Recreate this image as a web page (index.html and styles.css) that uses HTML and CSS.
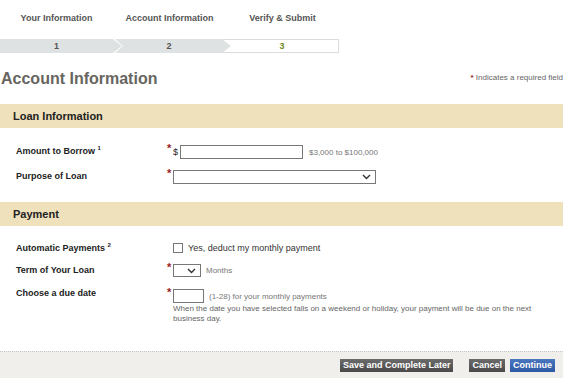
FILE: index.html
```html
<!DOCTYPE html>
<html lang="en">
<head>
    <meta charset="UTF-8">
    <meta name="viewport" content="width=device-width, initial-scale=1.0">
    <title>Account Information</title>
    <link rel="stylesheet" href="styles.css">
</head>
<body>
    <div class="page">
        <div class="step-labels">
            <span>Your Information</span>
            <span>Account Information</span>
            <span>Verify &amp; Submit</span>
        </div>
        <div class="step-bar">
            <div class="step step-1">1</div>
            <div class="step step-2">2</div>
            <div class="step step-3">3</div>
        </div>

        <div class="title-row">
            <h1>Account Information</h1>
            <span class="req-note"><span class="star">*</span> Indicates a required field</span>
        </div>

        <div class="section-head">Loan Information</div>
        <div class="form-rows loan">
            <div class="row">
                <label class="field-label" for="amount">Amount to Borrow <sup>1</sup></label>
                <div class="field">
                    <span class="req">*</span>
                    <span class="dollar">$</span>
                    <input type="text" id="amount" class="input-amount">
                    <span class="hint">$3,000 to $100,000</span>
                </div>
            </div>
            <div class="row">
                <label class="field-label" for="purpose">Purpose of Loan</label>
                <div class="field">
                    <span class="req">*</span>
                    <select id="purpose" class="select-purpose"><option></option></select>
                </div>
            </div>
        </div>

        <div class="section-head">Payment</div>
        <div class="form-rows payment">
            <div class="row">
                <label class="field-label" for="autopay">Automatic Payments <sup>2</sup></label>
                <div class="field no-req">
                    <input type="checkbox" id="autopay" class="check">
                    <span class="check-text">Yes, deduct my monthly payment</span>
                </div>
            </div>
            <div class="row row-term">
                <label class="field-label" for="term">Term of Your Loan</label>
                <div class="field">
                    <span class="req">*</span>
                    <select id="term" class="select-term"><option></option></select>
                    <span class="hint">Months</span>
                </div>
            </div>
            <div class="row row-due">
                <label class="field-label" for="dueDate">Choose a due date</label>
                <div class="field stacked">
                    <div class="field">
                        <span class="req">*</span>
                        <input type="text" id="dueDate" class="input-due">
                        <span class="hint">(1-28) for your monthly payments</span>
                    </div>
                    <div class="note">When the date you have selected falls on a weekend or holiday, your payment will be due on the next business day.</div>
                </div>
            </div>
        </div>

        <div class="actions">
            <button class="btn btn-dark">Save and Complete Later</button>
            <button class="btn btn-dark btn-cancel">Cancel</button>
            <button class="btn btn-blue">Continue</button>
        </div>
    </div>
</body>
</html>
```

FILE: styles.css
```css
body {
    margin: 0;
    font-family: "Liberation Sans", Arial, sans-serif;
    color: #222;
    background: #fff;
}

.page {
    width: 563px;
    padding-top: 12px;
}

/* wizard steps */
.step-labels {
    display: flex;
}

.step-labels span {
    width: 113px;
    text-align: center;
    font-size: 9px;
    font-weight: bold;
    line-height: 12px;
    color: #555;
}

.step-bar {
    display: flex;
    width: 339px;
    height: 14px;
    margin-top: 15px;
}

.step {
    box-sizing: border-box;
    height: 14px;
    line-height: 14px;
    font-size: 9px;
    font-weight: bold;
    color: #555;
    text-align: center;
}

.step-1 {
    width: 122px;
    padding-right: 9px;
    background: #dfe2e2;
    clip-path: polygon(0 0, 113px 0, 122px 50%, 113px 100%, 0 100%);
    z-index: 2;
}

.step-2 {
    width: 116px;
    margin-left: -7px;
    padding: 0 16px 0 8px;
    background: #dfe2e2;
    clip-path: polygon(0 0, 107px 0, 116px 50%, 107px 100%, 0 100%, 8px 50%);
    z-index: 2;
}

.step-3 {
    flex: 1;
    margin-left: -9px;
    padding-left: 3px;
    line-height: 12px;
    border: 1px solid #dcdcdc;
    background: #fff;
    color: #6d8b1c;
    z-index: 1;
}

/* title */
.title-row {
    display: flex;
    justify-content: space-between;
    align-items: center;
    height: 18px;
    margin: 17px 0 16px;
}

.title-row h1 {
    margin: 0;
    padding-left: 1px;
    font-size: 16px;
    line-height: 18px;
    color: #676560;
}

.req-note {
    font-size: 8px;
    color: #666;
    margin-top: -3px;
}

.star,
.req {
    color: #9b1c1c;
    font-weight: bold;
}

/* sections */
.section-head {
    height: 24px;
    line-height: 24px;
    padding-left: 13px;
    background: #efe1bb;
    font-size: 11px;
    font-weight: bold;
    color: #222;
}

.form-rows.loan {
    padding: 17px 0 18px;
}

.form-rows.payment {
    padding: 16px 0 27px;
}

.row {
    display: flex;
    align-items: flex-start;
}

.row + .row {
    margin-top: 11px;
}

.row-term {
    margin-top: 10px !important;
}

.row-due {
    margin-top: 12px !important;
}

.field-label {
    flex: none;
    width: 167px;
    box-sizing: border-box;
    padding-left: 16px;
    font-size: 9px;
    font-weight: bold;
    line-height: 12px;
    color: #222;
}

.row-due .field-label {
    margin-top: -2px;
}

.field-label sup {
    font-size: 6px;
    line-height: 0;
    vertical-align: 4px;
}

.field {
    display: flex;
    align-items: center;
    font-size: 8px;
    color: #777;
}

.field.no-req {
    padding-left: 6px;
}

.field.stacked {
    flex-direction: column;
    align-items: flex-start;
}

.req {
    align-self: flex-start;
    width: 6px;
    margin-top: -1px;
    font-size: 11px;
    line-height: 9px;
}

.dollar {
    width: 7px;
    font-size: 9px;
    color: #222;
}

input[type="text"],
select {
    box-sizing: border-box;
    height: 14px;
    margin: 0;
    padding: 0 2px;
    border: 1px solid #777;
    border-radius: 0;
    background: #fff;
    font-family: inherit;
    font-size: 9px;
}

select {
    appearance: none;
    -webkit-appearance: none;
    background: #fff url("data:image/svg+xml,%3Csvg xmlns='http://www.w3.org/2000/svg' width='9' height='6'%3E%3Cpath d='M1 1l3.5 3.5L8 1' fill='none' stroke='%23333' stroke-width='1.4'/%3E%3C/svg%3E") no-repeat right 4px center;
}

.input-amount {
    width: 123px;
}

.select-purpose {
    width: 203px;
}

.select-term {
    width: 28px;
    height: 13px !important;
}

.input-due {
    width: 31px;
}

.hint {
    margin-left: 5px;
    white-space: nowrap;
}

.input-amount + .hint {
    margin-left: 6px;
}

.check {
    appearance: none;
    -webkit-appearance: none;
    width: 10px;
    height: 10px;
    margin: 1px 5px 0 0;
    border: 1px solid #777;
    background: #fff;
}

.check-text {
    font-size: 9px;
    color: #333;
}

.note {
    width: 384px;
    padding-left: 6px;
    margin-top: 1px;
    font-size: 8px;
    line-height: 10px;
    color: #666;
}

/* footer buttons */
.actions {
    display: flex;
    justify-content: flex-end;
    padding: 7px 8px 11px;
    background: #f0efeb;
    border-top: 1px dotted #c9c7c1;
}

.btn {
    height: 13px;
    padding: 0 3px;
    border: none;
    border-radius: 0;
    font-family: inherit;
    font-size: 9px;
    font-weight: bold;
    line-height: 13px;
    color: #fff;
    cursor: pointer;
}

.btn-dark {
    background: linear-gradient(#6b6b6b, #4a4a4a);
}

.btn-blue {
    margin-left: 5px;
    background: linear-gradient(#4b77c0, #2d58a2);
}

.btn-cancel {
    margin-left: 16px;
}
```
